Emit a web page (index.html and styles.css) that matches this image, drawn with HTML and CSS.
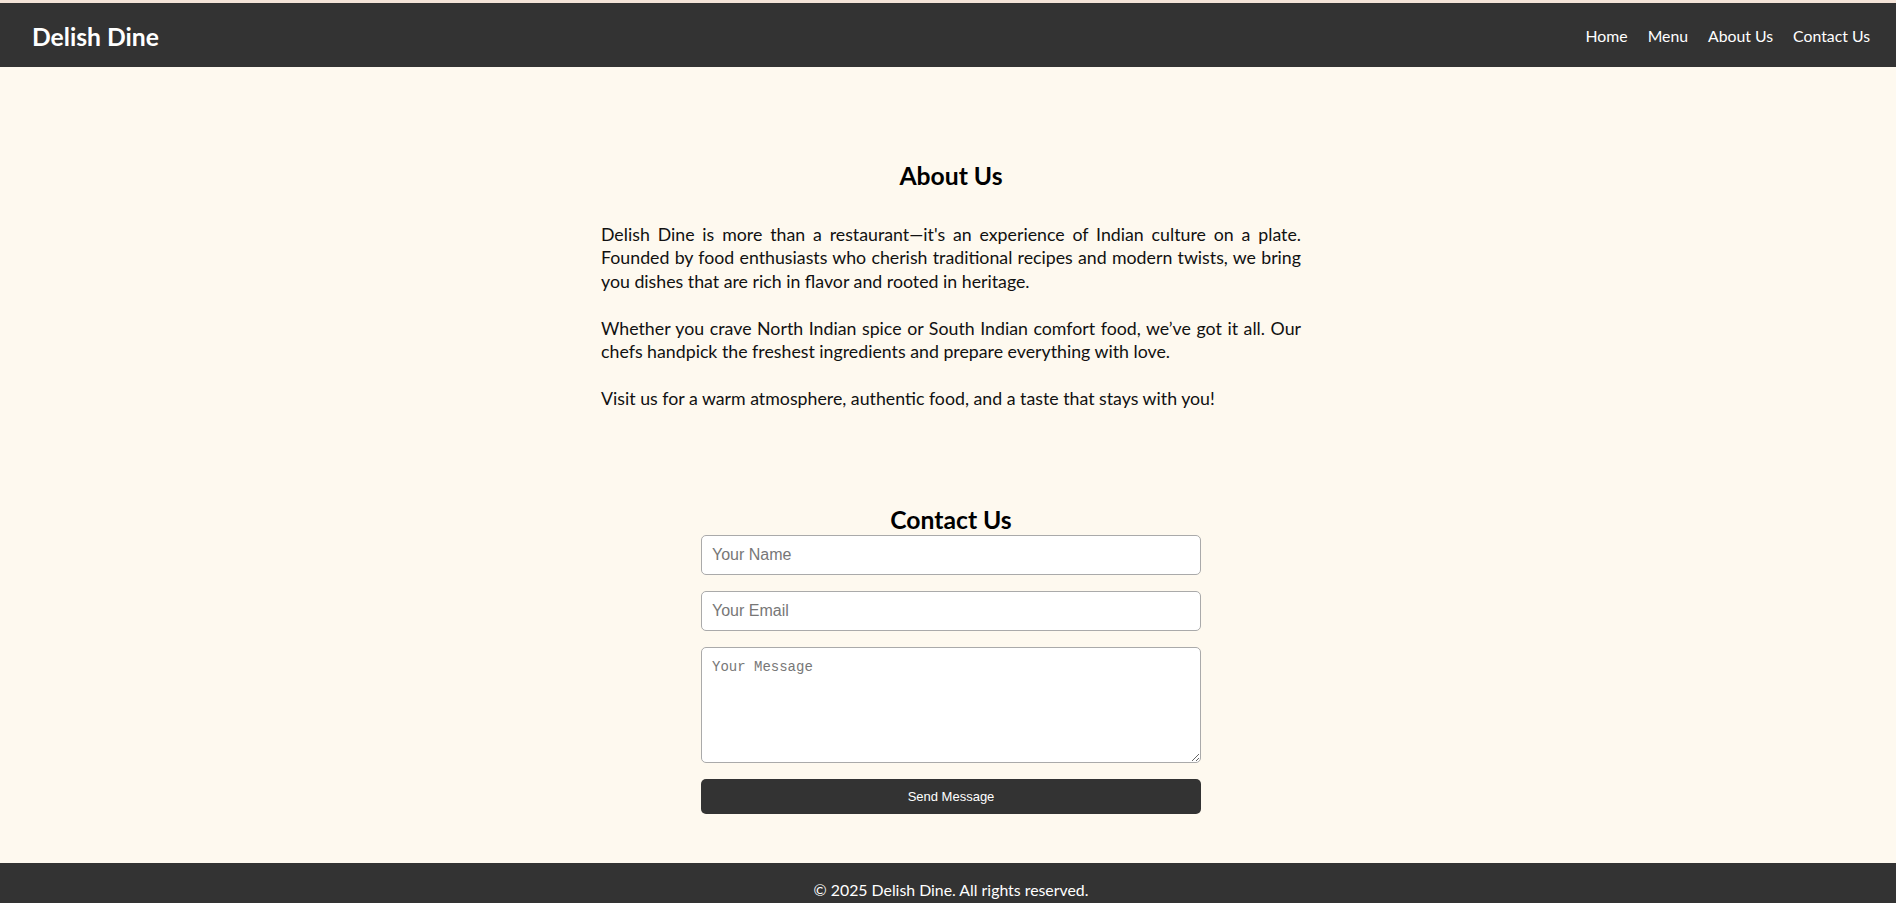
FILE: index.html
```html
<!DOCTYPE html>
<html lang="en">
<head>
<meta charset="utf-8">
<title>Delish Dine</title>
<link rel="stylesheet" href="styles.css">
</head>
<body>
<div class="page">
  <header class="site-header">
    <div class="logo">Delish Dine</div>
    <nav class="nav">
      <a href="#" class="nav-link">Home</a>
      <a href="#" class="nav-link">Menu</a>
      <a href="#about" class="nav-link">About Us</a>
      <a href="#contact" class="nav-link">Contact Us</a>
    </nav>
  </header>

  <main>
    <section class="about" id="about">
      <h2 class="section-title about-title">About Us</h2>
      <div class="about-text">
        <p>Delish Dine is more than a restaurant—it's an experience of Indian culture on a plate. Founded by food enthusiasts who cherish traditional recipes and modern twists, we bring you dishes that are rich in flavor and rooted in heritage.</p>
        <p>Whether you crave North Indian spice or South Indian comfort food, we’ve got it all. Our chefs handpick the freshest ingredients and prepare everything with love.</p>
        <p>Visit us for a warm atmosphere, authentic food, and a taste that stays with you!</p>
      </div>
    </section>

    <section class="contact" id="contact">
      <h2 class="section-title contact-title">Contact Us</h2>
      <form class="contact-form">
        <input class="field" type="text" placeholder="Your Name">
        <input class="field" type="email" placeholder="Your Email">
        <textarea class="field message" placeholder="Your Message"></textarea>
        <button class="send-btn" type="button">Send Message</button>
      </form>
    </section>
  </main>

  <footer class="site-footer">
    <p>© 2025 Delish Dine. All rights reserved.</p>
  </footer>
</div>
</body>
</html>
```
FILE: styles.css
```css
html {
  overflow-x: hidden;
}

body {
  margin: 0;
  background: #fef9ef;
  border-top: 3px solid #f4e4d8;
  font-family: Lato, "Noto Sans", sans-serif;
  color: #111;
}

.page {
  width: calc(100% + 6px);
}

.site-header {
  height: 64px;
  background: #333;
  color: #fff;
  display: flex;
  align-items: center;
  justify-content: space-between;
  padding: 0 32px;
  box-sizing: border-box;
}

.logo {
  font-size: 24.7px;
  font-weight: 700;
  line-height: 1.2;
  margin-top: 3px;
}

.nav {
  display: flex;
  gap: 20px;
  margin-top: 2px;
}

.nav-link {
  color: #fff;
  text-decoration: none;
  font-size: 15.8px;
  line-height: 1.2;
}

.section-title {
  margin: 0;
  text-align: center;
  font-size: 24.7px;
  font-weight: 700;
  line-height: 30px;
  color: #000;
}

.about {
  padding-top: 93.5px;
}

.about-title {
  margin-bottom: 32.5px;
}

.about-text {
  max-width: 700px;
  margin: 0 auto;
  text-align: justify;
  font-size: 17.75px;
  line-height: 23.4px;
}

.about-text p {
  margin: 0 0 23.4px;
}

.about-text p:last-child {
  margin-bottom: 0;
}

.contact {
  padding-top: 94.3px;
  padding-bottom: 49.7px;
}

.contact-title {
  margin-bottom: 0;
}

.contact-form {
  width: 500px;
  margin: 0 auto;
  display: flex;
  flex-direction: column;
  gap: 16px;
}

.field {
  box-sizing: border-box;
  width: 100%;
  margin: 0;
  padding: 10px;
  border: 1px solid #aaa;
  border-radius: 5px;
  background: #fff;
  font-family: "Liberation Sans", Arial, sans-serif;
  font-size: 16px;
  line-height: 18px;
  height: 40px;
  color: #222;
}

.field::placeholder {
  color: #777;
}

.message {
  height: 116px;
  font-family: "Liberation Mono", "DejaVu Sans Mono", monospace;
  font-size: 14px;
  line-height: 1.4;
  resize: vertical;
}

.send-btn {
  height: 35px;
  border: none;
  border-radius: 5px;
  background: #333;
  color: #fff;
  font-family: "Liberation Sans", Arial, sans-serif;
  font-size: 13px;
  padding: 10px;
  cursor: pointer;
}

.site-footer {
  background: #333;
  color: #fff;
  text-align: center;
  padding: 16px;
}

.site-footer p {
  margin: 0;
  font-size: 15.85px;
  line-height: 22px;
}
```
